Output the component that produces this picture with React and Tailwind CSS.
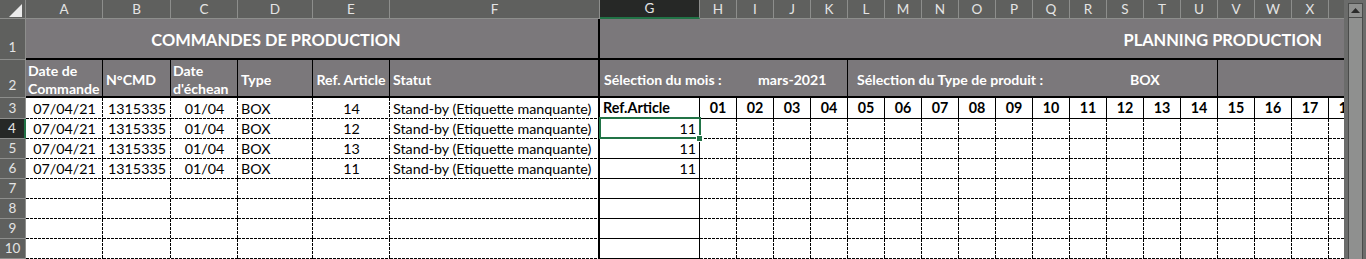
import React from "react";

const LETTERS = ["A", "B", "C", "D", "E", "F", "G", "H", "I", "J", "K", "L", "M", "N", "O", "P", "Q", "R", "S", "T", "U", "V", "W", "X", "Y"];
const DAYS = ["01", "02", "03", "04", "05", "06", "07", "08", "09", "10", "11", "12", "13", "14", "15", "16", "17", "18"];

const ORDERS = [
  { date: "07/04/21", cmd: "1315335", due: "01/04", type: "BOX", ref: "14", status: "Stand-by (Etiquette manquante)" },
  { date: "07/04/21", cmd: "1315335", due: "01/04", type: "BOX", ref: "12", status: "Stand-by (Etiquette manquante)" },
  { date: "07/04/21", cmd: "1315335", due: "01/04", type: "BOX", ref: "13", status: "Stand-by (Etiquette manquante)" },
  { date: "07/04/21", cmd: "1315335", due: "01/04", type: "BOX", ref: "11", status: "Stand-by (Etiquette manquante)" },
];
const EMPTY = [null, null, null, null];
const PLANNING_REFS = ["Ref.Article", "11", "11", "11", null, null, null, null];

// Excel-like thin dashed borders (3px dash, 1px gap) drawn with gradients
const DASH_RB =
  "bg-white bg-no-repeat [background-image:repeating-linear-gradient(to_bottom,#000_0_3px,transparent_3px_4px),repeating-linear-gradient(to_right,#000_0_3px,transparent_3px_4px)] [background-size:1px_100%,100%_1px] [background-position:right_top,left_bottom]";
const DASH_B =
  "bg-white bg-no-repeat [background-image:repeating-linear-gradient(to_right,#000_0_3px,transparent_3px_4px)] [background-size:100%_1px] [background-position:left_bottom]";

const CELL = "flex items-center overflow-hidden whitespace-nowrap text-[14.3px] text-black";
const NUM = "text-[13.6px]";
const HEAD = "flex items-center justify-center bg-[#5f605e] text-[#e4e4e4] text-[13.5px] border-r border-b border-[#8d8e8c]";
const FILL = "bg-[#7b787b] text-white font-bold";
const SUB = "pt-[4px] text-[14.1px]";

function RowHead({ n, active, tall }) {
  return (
    <div
      className={
        "flex justify-center text-[13.5px] border-b " +
        (tall ? "items-end pb-[2px] " : "items-center ") +
        (active
          ? "bg-[#262826] text-[#e4e4e4] border-b-[#8d8e8c] border-r-2 border-r-[#217346]"
          : "bg-[#5f605e] text-[#e4e4e4] border-[#8d8e8c] border-r")
      }
    >
      {n}
    </div>
  );
}

function OrderRow({ n, order, active }) {
  const o = order || {};
  const idx = n - 3;
  const gVal = PLANNING_REFS[idx];
  return (
    <>
      <RowHead n={n} active={active} />
      <div className={`${CELL} ${NUM} ${DASH_RB} justify-center`}>{o.date}</div>
      <div className={`${CELL} ${NUM} ${DASH_RB} justify-center`}>{o.cmd}</div>
      <div className={`${CELL} ${NUM} ${DASH_RB} justify-center`}>{o.due}</div>
      <div className={`${CELL} ${DASH_RB} pl-[3px]`}>{o.type}</div>
      <div className={`${CELL} ${NUM} ${DASH_RB} justify-center`}>{o.ref}</div>
      <div className={`${CELL} ${DASH_B} pl-[3px] border-r-2 border-black`}>{o.status}</div>
      {n === 3 ? (
        <div className={`${CELL} bg-white font-bold pl-[3px] border-r border-b border-black`}>{gVal}</div>
      ) : (
        <div className={`${CELL} ${NUM} relative overflow-visible bg-white justify-end pr-[3px] border-r border-b border-black`}>
          {gVal}
          {active && (
            <>
              <div className="absolute z-10 -top-[2px] -left-px -right-[2px] -bottom-px border-2 border-[#217346]" />
              <div className="absolute z-20 -right-[4px] -bottom-[4px] w-[7px] h-[7px] bg-[#217346] border border-white" />
            </>
          )}
        </div>
      )}
      {DAYS.map((d) =>
        n === 3 ? (
          <div key={d} className={`${CELL} bg-white font-bold justify-center border-r border-b border-black`}>
            {d}
          </div>
        ) : (
          <div key={d} className={`${CELL} ${DASH_RB}`} />
        )
      )}
    </>
  );
}

function Scrollbar() {
  return (
    <div className="w-[22px] h-[259px] shrink-0 bg-[#6b6c6b] flex flex-col items-center pt-[3px] pl-[1px]">
      <div className="w-[15px] h-[15px] border border-[#4a4b4a] bg-[#8f908f] flex items-center justify-center">
        <svg width="9" height="5" viewBox="0 0 9 5">
          <polygon points="0,5 9,5 4.5,0" fill="#2a2a2a" />
        </svg>
      </div>
      <div className="w-[15px] flex-1 border-x border-[#4a4b4a] bg-[#8f908f]" />
    </div>
  );
}

export default function App() {
  const rows = [...ORDERS, ...EMPTY];
  return (
    <div className="w-[1366px] h-[259px] flex bg-[#5f605e] font-['Lato',sans-serif] overflow-hidden">
      <div className="w-[1344px] h-[259px] overflow-hidden shrink-0">
        <div className="w-[1366px] grid grid-cols-[26px_77px_68px_67px_75px_77px_210px_100px_repeat(18,37px)] grid-rows-[19px_41px_38px_21px_repeat(7,20px)]">
          {/* column letters */}
          <div className="relative bg-[#5f605e] border-r border-b border-[#8d8e8c]">
            <svg className="absolute left-[9px] top-[4px]" width="13" height="13" viewBox="0 0 13 13">
              <polygon points="13,0 13,13 0,13" fill="#ececec" />
            </svg>
          </div>
          {LETTERS.map((l) =>
            l === "G" ? (
              <div key={l} className="flex items-center justify-center bg-[#262826] text-[#e4e4e4] text-[13.5px] border-r border-r-[#8d8e8c] border-b-2 border-b-[#217346]">
                {l}
              </div>
            ) : (
              <div key={l} className={HEAD}>
                {l === "Y" ? "" : l}
              </div>
            )
          )}

          {/* row 1: titles */}
          <RowHead n={1} tall />
          <div className={`col-span-6 flex items-center justify-center pt-[3px] pr-[72px] ${FILL} text-[16.4px] border-b-2 border-r-2 border-black`}>
            COMMANDES DE PRODUCTION
          </div>
          <div className={`col-span-19 flex items-center justify-end pt-[3px] pr-[44px] ${FILL} text-[16.4px] border-b-2 border-black`}>
            PLANNING PRODUCTION
          </div>

          {/* row 2: column titles and selectors */}
          <RowHead n={2} tall />
          <div className={`flex items-center pl-[2px] leading-[18px] ${SUB} ${FILL} border-r border-b-2 border-black`}>
            <span>
              Date de
              <br />
              Commande
            </span>
          </div>
          <div className={`flex items-center pl-[3px] ${SUB} ${FILL} border-r border-b-2 border-black`}>N°CMD</div>
          <div className={`flex items-center pl-[2px] leading-[18px] ${SUB} ${FILL} border-r border-b-2 border-black`}>
            <span>
              Date
              <br />
              d'échean
            </span>
          </div>
          <div className={`flex items-center pl-[3px] ${SUB} ${FILL} border-r border-b-2 border-black`}>Type</div>
          <div className={`flex items-center justify-center whitespace-nowrap ${SUB} ${FILL} border-r border-b-2 border-black`}>Ref. Article</div>
          <div className={`flex items-center pl-[3px] ${SUB} ${FILL} border-r-2 border-b-2 border-black`}>Statut</div>
          <div className={`col-span-5 flex items-center pl-[4px] whitespace-nowrap ${SUB} ${FILL} border-r border-b-2 border-black`}>
            <span className="w-[154px]">Sélection du mois :</span>
            <span>mars-2021</span>
          </div>
          <div className={`col-span-10 flex items-center pl-[9px] whitespace-nowrap ${SUB} ${FILL} border-r border-b-2 border-black`}>
            <span className="w-[273px]">Sélection du Type de produit :</span>
            <span>BOX</span>
          </div>
          <div className={`col-span-4 ${FILL} border-b-2 border-black`} />

          {/* rows 3-10 */}
          {rows.map((o, i) => (
            <OrderRow key={i} n={i + 3} order={o} active={i + 3 === 4} />
          ))}
        </div>
      </div>
      <Scrollbar />
    </div>
  );
}
